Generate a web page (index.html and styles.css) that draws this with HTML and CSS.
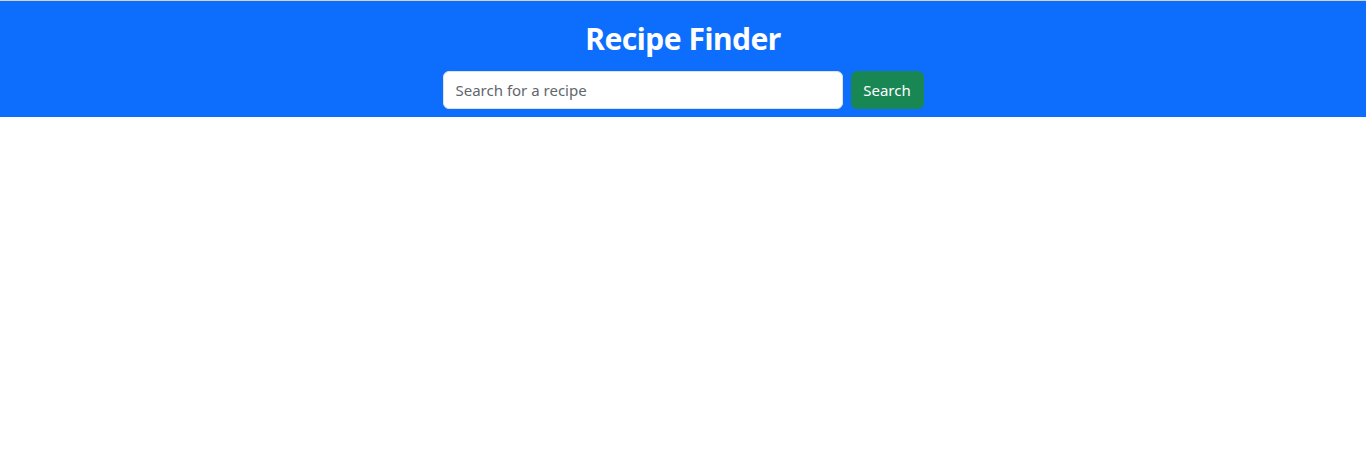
FILE: index.html
```html
<!DOCTYPE html>
<html lang="en">
<head>
<meta charset="utf-8">
<title>Recipe Finder</title>
<link rel="stylesheet" href="styles.css">
</head>
<body>
<header class="hero">
  <h2 class="hero-title">Recipe Finder</h2>
  <form class="search" onsubmit="return false;">
    <input class="search-input" type="text" placeholder="Search for a recipe">
    <button class="search-btn" type="submit">Search</button>
  </form>
</header>
</body>
</html>
```
FILE: styles.css
```css
html, body {
  margin: 0;
  padding: 0;
  background: #fff;
}
body {
  font-family: "Noto Sans", "Open Sans", sans-serif;
  border-top: 1px solid #d3d3d3;
}
.hero {
  background: #0d6efd;
  color: #fff;
  padding: 19px 0 8px;
  display: flex;
  flex-direction: column;
  align-items: center;
}
.hero-title {
  margin: 0 0 14px;
  font-size: 30px;
  font-weight: 700;
  line-height: 37px;
  letter-spacing: -0.5px;
}
.search {
  display: flex;
  gap: 8px;
}
.search-input {
  box-sizing: border-box;
  width: 400px;
  height: 38px;
  padding: 6px 12px;
  border: 1px solid #dee2e6;
  border-radius: 6px;
  font-family: inherit;
  font-size: 15px;
  color: #212529;
  outline: none;
}
.search-input::placeholder {
  color: #5f666d;
}
.search-btn {
  box-sizing: border-box;
  width: 73px;
  height: 38px;
  padding: 0;
  border: 1px solid #198754;
  border-radius: 6px;
  background: #198754;
  color: #fff;
  font-family: inherit;
  font-size: 15px;
  cursor: pointer;
}
```
